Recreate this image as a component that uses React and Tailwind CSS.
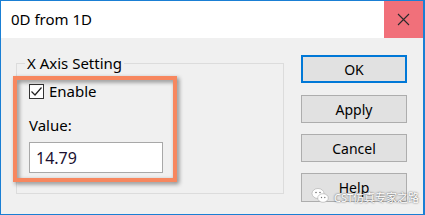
export default function App() {
  return (
    <div className="relative w-[425px] h-[215px] overflow-hidden border border-r-2 border-[#1a7fd4] bg-[#f0f0f0] flex flex-col font-['Noto_Sans','Noto_Sans_CJK_SC',sans-serif] text-black">
      {/* title bar */}
      <div className="h-[37px] bg-white flex items-center justify-between shrink-0">
        <div className="pl-[10px] text-[15px]">0D from 1D</div>
        <div className="w-[39px] h-full bg-[#f1707a] flex items-center justify-center">
          <svg width="13" height="13" viewBox="0 0 13 13">
            <path d="M1 1L12 12M12 1L1 12" stroke="#2b2b2b" strokeWidth="1.1" />
          </svg>
        </div>
      </div>

      {/* body */}
      <div className="flex items-start flex-1">
        <fieldset className="ml-[15px] mt-[15px] w-[268px] h-[141px] border border-[#dcdcdc] p-0 m-0">
          <legend className="ml-[8px] px-[2px] text-[15px] leading-[20px]">X Axis Setting</legend>
          <div className="pl-[12px] flex flex-col">
            <label className="mt-[9px] h-[18px] flex items-center gap-[5px] text-[15px]">
              <span className="w-[15px] h-[15px] border border-[#333] bg-white flex items-center justify-center">
                <svg width="13" height="13" viewBox="0 0 13 13">
                  <path d="M1.5 6.5L5 10L11.5 2.5" stroke="#222" strokeWidth="1.2" fill="none" />
                </svg>
              </span>
              Enable
            </label>
            <div className="mt-[16px] h-[18px] flex items-center text-[15px]">Value:</div>
            <div className="mt-[8px] w-[134px] h-[31px] border border-[#a8a8a8] bg-white flex items-center pl-[6px] text-[16px] text-[#1a1030]">
              14.79
            </div>
          </div>
        </fieldset>

        <div className="ml-[17px] mt-[17px] flex flex-col text-[14px]">
          <button className="w-[106px] h-[28px] border-2 border-[#0078d7] bg-[#e1e1e1]">OK</button>
          <button className="mt-[12px] w-[106px] h-[28px] border border-[#adadad] bg-[#e1e1e1]">Apply</button>
          <button className="mt-[11px] w-[106px] h-[28px] border border-[#adadad] bg-[#e1e1e1]">Cancel</button>
          <button className="mt-[11px] w-[106px] h-[29px] border border-[#adadad] bg-[#e1e1e1]">Help</button>
        </div>
      </div>

      {/* annotation highlight */}
      <div className="absolute left-[12px] top-[75px] w-[164px] h-[106px] border-4 border-[#f7875f] pointer-events-none drop-shadow-[2px_2px_2px_rgba(0,0,0,0.45)]" />

      {/* watermark */}
      <div className="absolute left-[310px] top-[185px] flex items-center gap-[5px] text-white text-[11px] leading-[14px] [text-shadow:0_0_2px_rgba(0,0,0,0.75)]">
        <svg width="18" height="17" viewBox="0 0 18 17">
          <ellipse cx="7" cy="6.5" rx="6" ry="5" fill="white" stroke="#aaa" strokeWidth="0.6" />
          <ellipse cx="12" cy="11" rx="5.3" ry="4.3" fill="white" stroke="#aaa" strokeWidth="0.6" />
          <circle cx="5" cy="5.5" r="0.8" fill="#777" />
          <circle cx="9" cy="5.5" r="0.8" fill="#777" />
          <circle cx="10.5" cy="10.5" r="0.7" fill="#777" />
          <circle cx="13.8" cy="10.5" r="0.7" fill="#777" />
        </svg>
        <span className="mt-[5px]">CST仿真专家之路</span>
      </div>
    </div>
  );
}
